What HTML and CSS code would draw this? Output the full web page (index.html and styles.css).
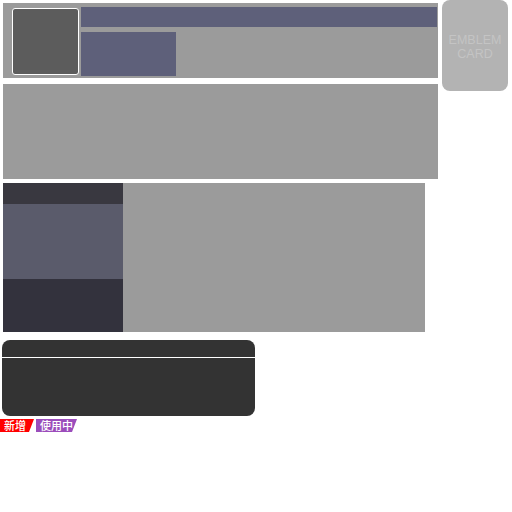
FILE: index.html
```html
<!DOCTYPE html>
<html lang="en">
<head>
  <meta charset="UTF-8">
  <title>Profile</title>
  <link rel="stylesheet" href="styles.css">
</head>
<body>

  <div class="top">
    <div class="main">
      <div class="hero">
        <div class="avatar"></div>
        <div class="hero-info">
          <div class="name-bar"></div>
          <div class="sub-bar"></div>
        </div>
      </div>

      <div class="block"></div>

      <div class="split">
        <div class="side">
          <div class="side-head"></div>
          <div class="side-mid"></div>
          <div class="side-foot"></div>
        </div>
        <div class="split-body"></div>
      </div>
    </div>

    <div class="emblem">EMBLEM<br>CARD</div>
  </div>

  <div class="card">
    <div class="card-head"></div>
    <div class="card-body"></div>
  </div>

  <div class="tags">
    <span class="tag tag-new">新增</span>
    <span class="tag tag-use">使用中</span>
  </div>

</body>
</html>
```

FILE: styles.css
```css
* {
  box-sizing: border-box;
  margin: 0;
  padding: 0;
}

body {
  background: #fff;
  font-family: Roboto, "Liberation Sans", "Noto Sans CJK SC", sans-serif;
}

.top {
  display: flex;
  align-items: flex-start;
}

.main {
  width: 435px;
  margin: 3px 0 0 3px;
  display: flex;
  flex-direction: column;
}

/* header block */
.hero {
  height: 75px;
  background: #9b9b9b;
  display: flex;
  align-items: flex-start;
  padding: 0 1px 0 9px;
}

.avatar {
  width: 67px;
  height: 67px;
  margin-top: 5px;
  background: #5c5c5c;
  border: 1px solid #fff;
  border-radius: 3px;
}

.hero-info {
  flex: 1;
  margin: 4px 0 0 2px;
  display: flex;
  flex-direction: column;
  gap: 5px;
}

.name-bar {
  height: 20px;
  background: #5e607a;
}

.sub-bar {
  width: 95px;
  height: 44px;
  background: #5e607a;
}

.block {
  height: 95px;
  margin-top: 6px;
  background: #9b9b9b;
}

.split {
  width: 422px;
  height: 149px;
  margin-top: 4px;
  display: flex;
}

.side {
  width: 120px;
  display: flex;
  flex-direction: column;
}

.side-head {
  height: 21px;
  background: #393840;
}

.side-mid {
  height: 75px;
  background: #5a5b6b;
}

.side-foot {
  flex: 1;
  background: #33323d;
}

.split-body {
  flex: 1;
  background: #9b9b9b;
}

.emblem {
  width: 66px;
  height: 91px;
  margin-left: 4px;
  background: #b3b3b3;
  border-radius: 8px;
  color: #c4c4c4;
  font-family: "Liberation Sans", Arial, sans-serif;
  font-size: 12.5px;
  line-height: 14px;
  text-align: center;
  padding-top: 33px;
}

/* dark card */
.card {
  width: 253px;
  height: 76px;
  margin: 8px 0 0 2px;
  background: #333;
  border-radius: 8px;
  display: flex;
  flex-direction: column;
  overflow: hidden;
}

.card-head {
  height: 18px;
  border-bottom: 1px solid #fff;
}

.card-body {
  flex: 1;
}

.tags {
  display: flex;
  gap: 2px;
  margin-top: 3px;
}

.tag {
  height: 13px;
  color: #fff;
  font-family: "Noto Sans CJK SC", sans-serif;
  font-size: 11px;
  font-weight: 500;
  line-height: 13px;
  padding-left: 4px;
  clip-path: polygon(0 0, 100% 0, calc(100% - 5px) 100%, 0 100%);
}

.tag-new {
  width: 34px;
  background: #ff0000;
}

.tag-use {
  width: 41px;
  background: #9b4dbb;
}
```
